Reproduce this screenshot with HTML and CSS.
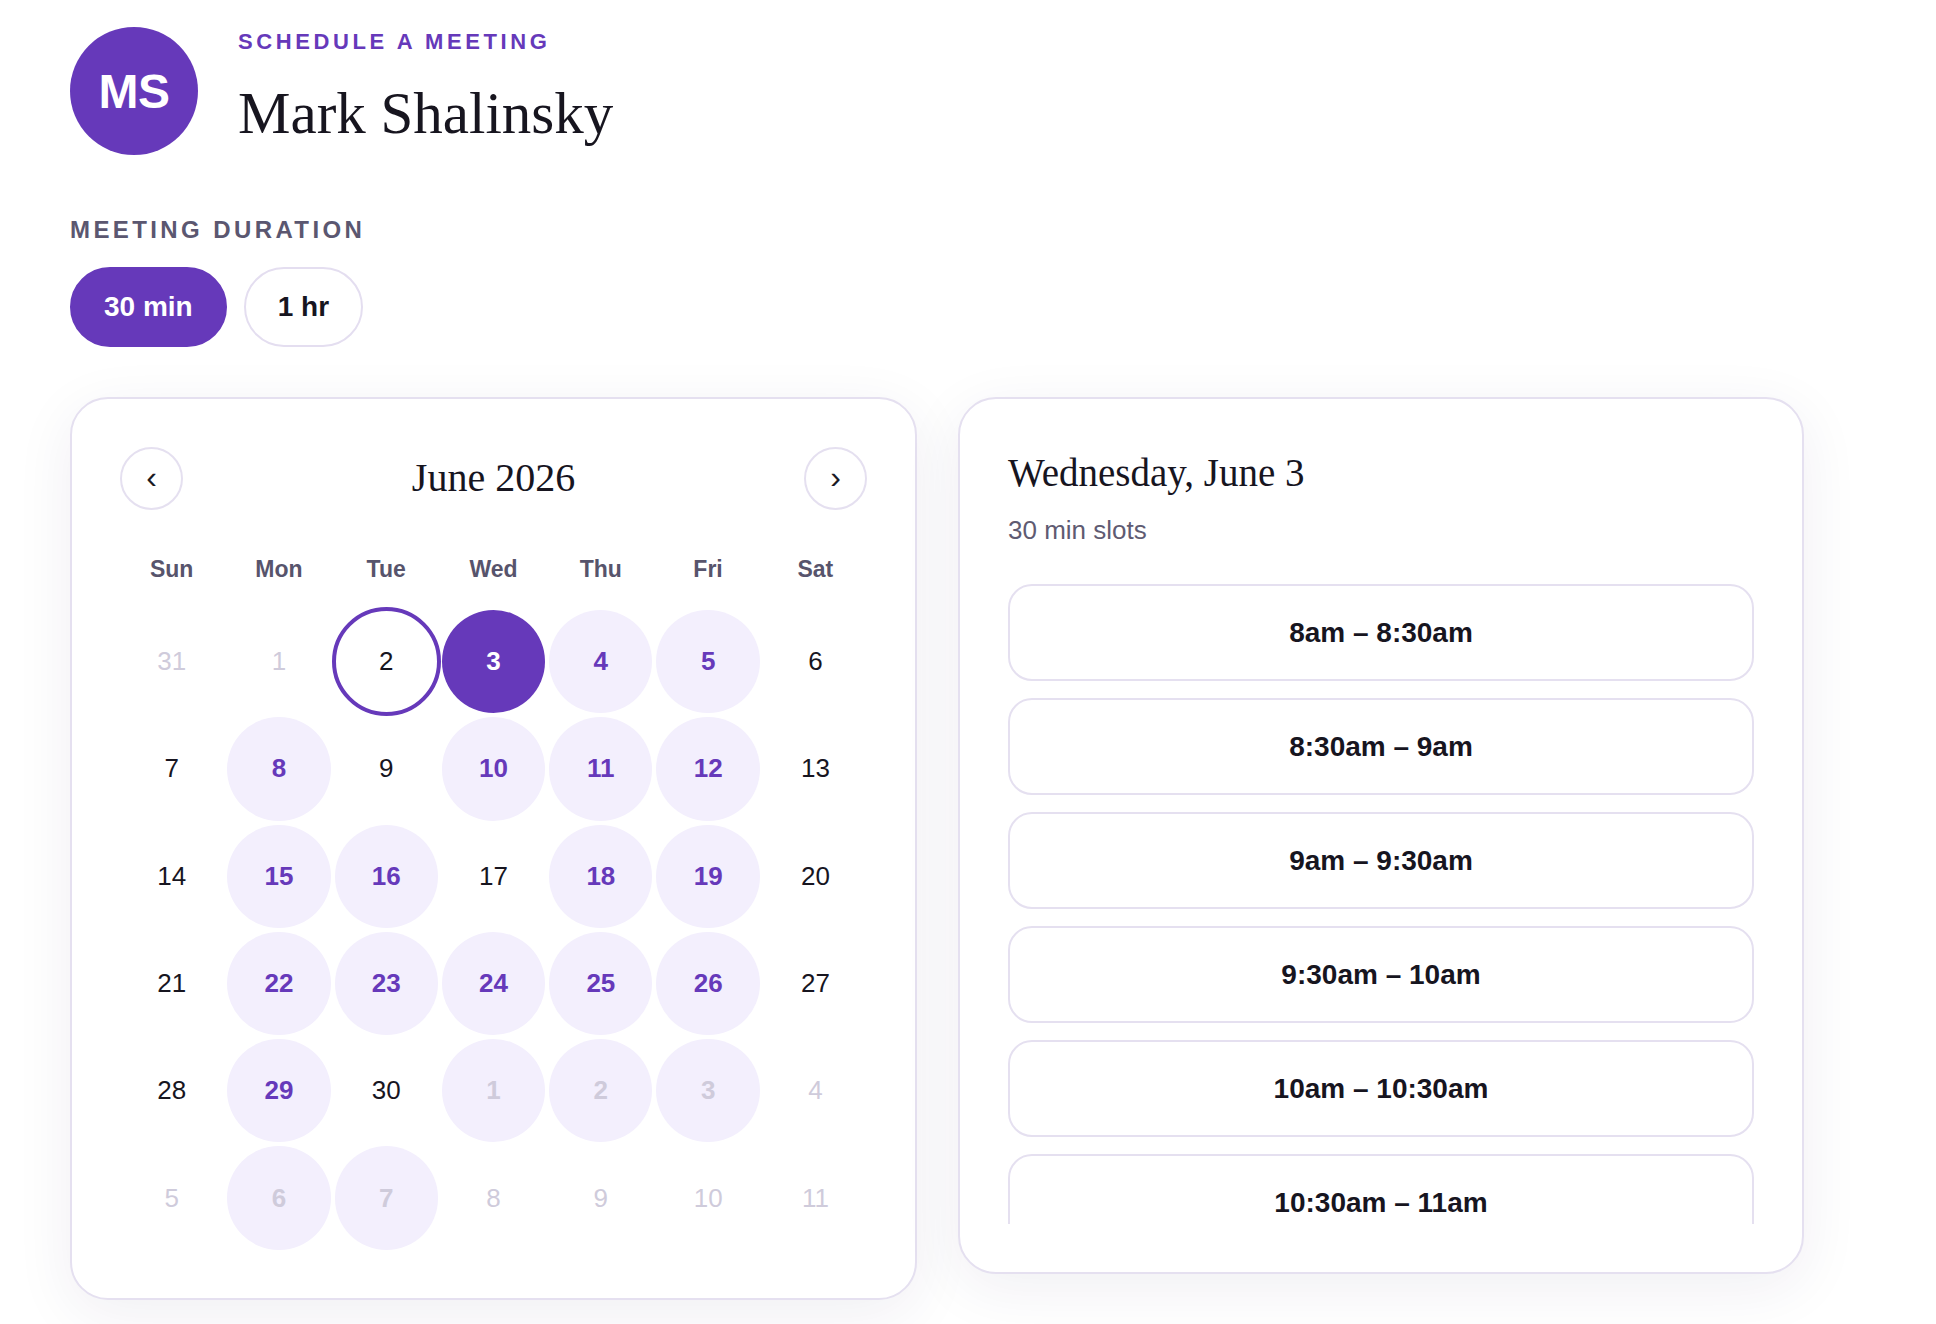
FILE: index.html
```html
<!DOCTYPE html>
<html lang="en">
<head>
<meta charset="utf-8">
<title>Schedule a meeting — Mark Shalinsky</title>
<link rel="stylesheet" href="styles.css">
</head>
<body>
<div class="page">
  <header class="header">
    <div class="avatar">MS</div>
    <div class="intro">
      <div class="eyebrow">SCHEDULE A MEETING</div>
      <h1 class="name">Mark Shalinsky</h1>
    </div>
  </header>

  <div class="section-label">MEETING DURATION</div>
  <div class="durations">
    <button class="pill active">30 min</button>
    <button class="pill">1 hr</button>
  </div>

  <main class="panels">
    <section class="card calendar">
      <div class="cal-head">
        <button class="nav">&#8249;</button>
        <div class="month">June 2026</div>
        <button class="nav">&#8250;</button>
      </div>
      <div class="weekdays">
        <div>Sun</div><div>Mon</div><div>Tue</div><div>Wed</div><div>Thu</div><div>Fri</div><div>Sat</div>
      </div>
      <div class="days">
        <div class="day muted">31</div>
        <div class="day muted">1</div>
        <div class="day today">2</div>
        <div class="day selected">3</div>
        <div class="day avail">4</div>
        <div class="day avail">5</div>
        <div class="day">6</div>

        <div class="day">7</div>
        <div class="day avail">8</div>
        <div class="day">9</div>
        <div class="day avail">10</div>
        <div class="day avail">11</div>
        <div class="day avail">12</div>
        <div class="day">13</div>

        <div class="day">14</div>
        <div class="day avail">15</div>
        <div class="day avail">16</div>
        <div class="day">17</div>
        <div class="day avail">18</div>
        <div class="day avail">19</div>
        <div class="day">20</div>

        <div class="day">21</div>
        <div class="day avail">22</div>
        <div class="day avail">23</div>
        <div class="day avail">24</div>
        <div class="day avail">25</div>
        <div class="day avail">26</div>
        <div class="day">27</div>

        <div class="day">28</div>
        <div class="day avail">29</div>
        <div class="day">30</div>
        <div class="day muted avail-out">1</div>
        <div class="day muted avail-out">2</div>
        <div class="day muted avail-out">3</div>
        <div class="day muted">4</div>

        <div class="day muted">5</div>
        <div class="day muted avail-out">6</div>
        <div class="day muted avail-out">7</div>
        <div class="day muted">8</div>
        <div class="day muted">9</div>
        <div class="day muted">10</div>
        <div class="day muted">11</div>
      </div>
    </section>

    <section class="card slots">
      <h2 class="slots-title">Wednesday, June 3</h2>
      <div class="slots-sub">30 min slots</div>
      <div class="slot-list">
        <button class="slot">8am – 8:30am</button>
        <button class="slot">8:30am – 9am</button>
        <button class="slot">9am – 9:30am</button>
        <button class="slot">9:30am – 10am</button>
        <button class="slot">10am – 10:30am</button>
        <button class="slot">10:30am – 11am</button>
      </div>
    </section>
  </main>
</div>
</body>
</html>
```

FILE: styles.css
```css
* { box-sizing: border-box; }

body {
  margin: 0;
  background: #ffffff;
  font-family: "Liberation Sans", Arial, sans-serif;
  color: #17151f;
}

button {
  font-family: inherit;
  margin: 0;
  cursor: pointer;
}

.page {
  padding: 27px 0 40px 70px;
}

/* Header */
.header {
  display: flex;
  align-items: flex-start;
  gap: 40px;
}

.avatar {
  width: 128px;
  height: 128px;
  flex: none;
  border-radius: 50%;
  background: #6639ba;
  color: #ffffff;
  display: flex;
  align-items: center;
  justify-content: center;
  font-weight: 700;
  font-size: 48px;
  letter-spacing: -0.5px;
}

.intro {
  padding-top: 2px;
}

.eyebrow {
  font-size: 22px;
  line-height: 26px;
  font-weight: 700;
  letter-spacing: 3.6px;
  color: #6639ba;
}

.name {
  margin: 25px 0 0;
  font-family: "Liberation Serif", "Times New Roman", serif;
  font-weight: 400;
  font-size: 59px;
  line-height: 66px;
  color: #17151f;
}

/* Duration */
.section-label {
  margin-top: 61px;
  font-size: 24px;
  line-height: 28px;
  font-weight: 700;
  letter-spacing: 3.4px;
  color: #5b5770;
}

.durations {
  display: flex;
  gap: 17px;
  margin-top: 23px;
}

.pill {
  border: 2px solid #e4def0;
  border-radius: 999px;
  padding: 22px 32px;
  font-size: 28px;
  line-height: 32px;
  font-weight: 700;
  background: #ffffff;
  color: #17151f;
}

.pill.active {
  background: #6639ba;
  border-color: #6639ba;
  color: #ffffff;
}

/* Panels */
.panels {
  display: grid;
  grid-template-columns: 847px 846px;
  column-gap: 41px;
  align-items: start;
  margin-top: 50px;
}

.card {
  background: #ffffff;
  border: 2px solid #e5e0f0;
  border-radius: 38px;
  padding: 48px;
  box-shadow: 0 14px 60px rgba(40, 30, 90, 0.07);
}

/* Calendar */
.cal-head {
  display: flex;
  align-items: center;
  justify-content: space-between;
  height: 62px;
}

.nav {
  width: 63px;
  height: 63px;
  padding: 0 0 3px;
  border: 2px solid #e5e0f0;
  border-radius: 50%;
  background: #ffffff;
  color: #1b1a24;
  font-size: 32px;
  line-height: 1;
  display: flex;
  align-items: center;
  justify-content: center;
}

.month {
  font-family: "Liberation Serif", "Times New Roman", serif;
  font-size: 40px;
  line-height: 46px;
  color: #17151f;
}

.weekdays {
  display: grid;
  grid-template-columns: repeat(7, 1fr);
  column-gap: 4px;
  margin-top: 38px;
  height: 44px;
  line-height: 44px;
  text-align: center;
  font-size: 23px;
  font-weight: 700;
  color: #57546c;
}

.days {
  display: grid;
  grid-template-columns: repeat(7, 1fr);
  gap: 4px;
  margin-top: 19px;
}

.day {
  aspect-ratio: 1 / 1;
  border-radius: 50%;
  display: flex;
  align-items: center;
  justify-content: center;
  font-size: 26px;
  color: #17151f;
}

.day.avail {
  background: #f3effd;
  color: #6639ba;
  font-weight: 700;
}

.day.selected {
  background: #6639ba;
  color: #ffffff;
  font-weight: 700;
}

.day.today {
  outline: 4px solid #6639ba;
  outline-offset: -1px;
}

.day.muted {
  color: #cfcbdb;
}

.day.avail-out {
  background: #f3effd;
  font-weight: 700;
}

/* Slots */
.slots-title {
  margin: 4px 0 0;
  font-family: "Liberation Serif", "Times New Roman", serif;
  font-weight: 400;
  font-size: 39px;
  line-height: 44px;
  color: #17151f;
}

.slots-sub {
  margin-top: 20px;
  font-size: 26px;
  line-height: 30px;
  color: #5f5b72;
}

.slot-list {
  margin-top: 39px;
  height: 640px;
  overflow: hidden;
  display: flex;
  flex-direction: column;
  gap: 17px;
}

.slot {
  flex: none;
  height: 97px;
  border: 2px solid #e5e0f0;
  border-radius: 24px;
  background: #ffffff;
  display: flex;
  align-items: center;
  justify-content: center;
  font-size: 28px;
  font-weight: 700;
  color: #17151f;
}
```
